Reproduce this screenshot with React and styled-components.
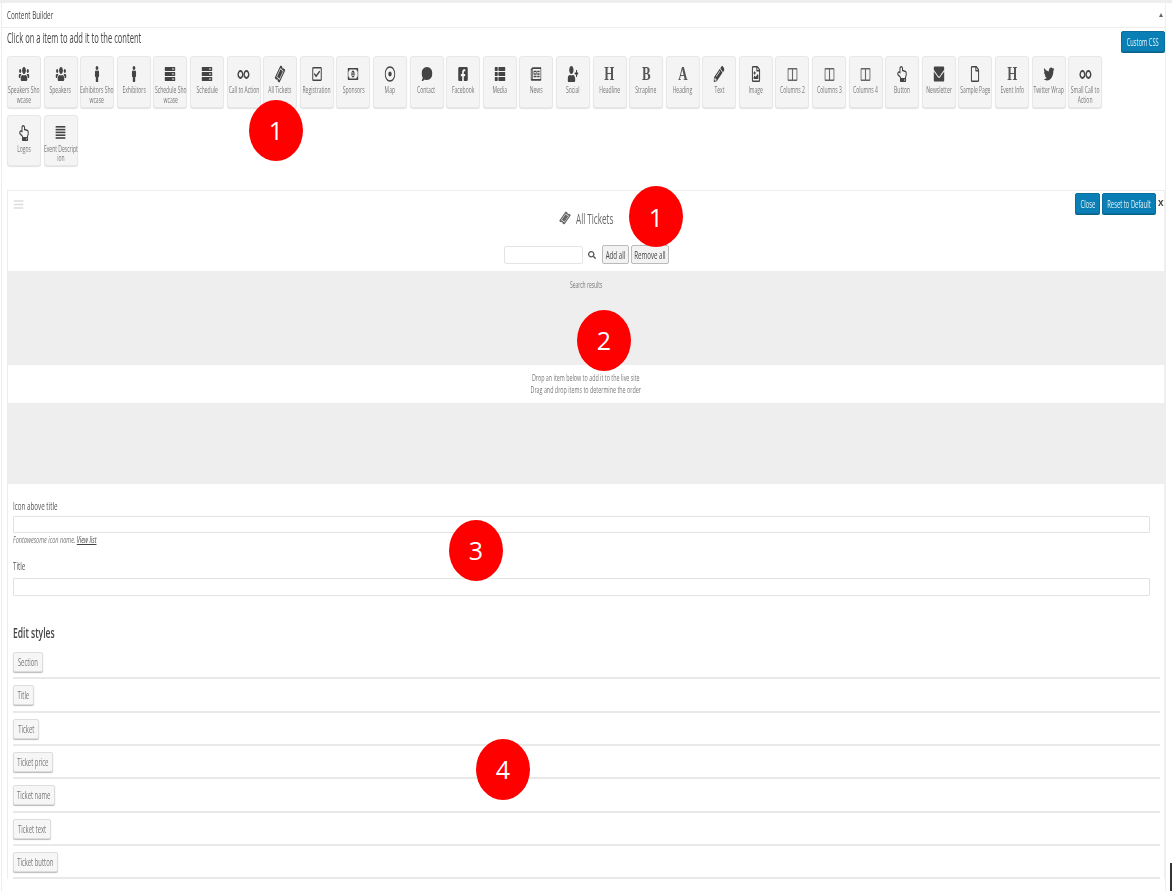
import React from 'react'
import styled, { createGlobalStyle } from 'styled-components'
import {
  FaUsers, FaMale, FaServer, FaTicketAlt, FaRegCheckSquare, FaRegMoneyBillAlt, FaRegDotCircle,
  FaComment, FaFacebookSquare, FaThList, FaRegNewspaper, FaUserPlus, FaPencilAlt, FaRegFileImage,
  FaRegHandPointUp, FaEnvelope, FaRegFile, FaTwitter, FaSearch, FaBars,
} from 'react-icons/fa'

const GlobalStyle = createGlobalStyle`
  html, body { margin: 0; padding: 0; background: #fff; }
  body { font-family: "Open Sans", "Liberation Sans", sans-serif; color: #555; }
`

const Page = styled.div`
  position: relative;
  width: 1172px;
  height: 891px;
  overflow: hidden;
  box-sizing: border-box;
  border-top: 3px solid #eee;
  filter: blur(0.45px);
`

const Narrow = styled.span`
  display: inline-block;
  flex: none;
  width: max-content;
  white-space: pre-line;
  text-align: center;
  transform: scaleX(${p => p.$x || 0.56});
  transform-origin: ${p => p.$origin || 'center'};
`

const Panel = styled.div`
  box-sizing: border-box;
  width: 1165px;
  margin-left: 1px;
  height: 100%;
  border-left: 1px solid #eee;
  border-right: 1px solid #f0f0f0;
`

const PanelHeader = styled.div`
  box-sizing: border-box;
  height: 25px;
  padding: 0 2px 0 5px;
  display: flex;
  align-items: center;
  justify-content: space-between;
  border-bottom: 1px solid #eee;
  font-size: 10px;
  color: #444;
`

const Caret = styled.i`
  width: 0;
  height: 0;
  border-left: 2.5px solid transparent;
  border-right: 2.5px solid transparent;
  border-bottom: 4px solid #666;
`

const PanelBody = styled.div`
  padding-left: 5px;
`

const TopRow = styled.div`
  display: flex;
  justify-content: space-between;
  align-items: flex-start;
  height: 28px;
  padding-top: 3px;
  box-sizing: border-box;
`

const Lead = styled.div`
  font-size: 14px;
  line-height: 14px;
  color: #444;
`

const BlueButton = styled.button`
  box-sizing: border-box;
  width: ${p => p.$w}px;
  height: ${p => p.$h || 21}px;
  padding: 0;
  display: flex;
  align-items: center;
  justify-content: center;
  border: 1px solid #0a6d9c;
  border-radius: 2px;
  background: #0a7fb5;
  color: #e8f4fa;
  font: 11px "Open Sans", sans-serif;
  box-shadow: 0 1px 0 #0a6488;
`

const TileGrid = styled.div`
  display: grid;
  grid-template-columns: repeat(30, 34px);
  grid-auto-rows: 51.5px;
  column-gap: 2.6px;
  row-gap: 7px;
`

const Tile = styled.div`
  box-sizing: border-box;
  padding-top: 10px;
  display: flex;
  flex-direction: column;
  align-items: center;
  background: #f4f4f4;
  border: 1px solid #e8e8e8;
  border-radius: 3px;
  box-shadow: 0 1px 1px #e0e0e0;
`

const TileIcon = styled.div`
  height: 14px;
  display: flex;
  align-items: center;
  justify-content: center;
  color: #444;
  font-size: 16px;
  transform: scaleX(0.68);
`

const TileLabel = styled.div`
  margin-top: 4px;
  display: flex;
  justify-content: center;
  width: 100%;
  font-size: 9.5px;
  line-height: 9.5px;
  color: #777;
`

const SerifGlyph = styled.span`
  display: inline-block;
  font: bold 19px/14px "Liberation Serif", serif;
  color: #555;
`

const Tall = styled.span`
  display: inline-flex;
  transform: scaleY(1.25);
`

const Tilted = styled.span`
  display: inline-flex;
  font-size: ${p => p.$size || 16}px;
  transform: rotate(-55deg) scaleY(0.8);
`

const Card = styled.div`
  box-sizing: border-box;
  margin-top: 24px;
  width: 100%;
  border: 1px solid #eee;
  border-bottom: 0;
`

const CardHead = styled.div`
  display: grid;
  grid-template-columns: 1fr auto 1fr;
  height: 80px;
`

const Handle = styled.div`
  padding: 7px 0 0 5px;
  color: #ddd;
  font-size: 11px;
`

const CardCenter = styled.div`
  display: flex;
  flex-direction: column;
  align-items: center;
`

const CardTitle = styled.div`
  margin-top: 18px;
  display: flex;
  align-items: center;
  gap: 5px;
  height: 18px;
  font-size: 14px;
  color: #666;
`

const TitleText = styled.div`
  width: 38px;
`

const SearchRow = styled.div`
  margin-top: 18px;
  display: flex;
  align-items: center;
  gap: 2px;
  color: #555;
`

const SearchInput = styled.div`
  box-sizing: border-box;
  width: 79px;
  height: 18px;
  margin-right: 3px;
  border: 1px solid #e4e4e4;
  border-radius: 2px;
  background: #fff;
`

const SearchIcon = styled.div`
  display: flex;
  font-size: 8px;
  margin-right: 4px;
`

const GrayButton = styled.button`
  box-sizing: border-box;
  width: ${p => p.$w}px;
  height: 19px;
  padding: 0;
  display: flex;
  align-items: center;
  justify-content: center;
  background: #f2f2f2;
  border: 1px solid #bbb;
  border-radius: 2px;
  color: #444;
  font: 11px "Open Sans", sans-serif;
`

const CardActions = styled.div`
  display: flex;
  justify-content: flex-end;
  gap: 2px;
  padding: 2px 1px 0 0;
`

const CloseX = styled.span`
  width: 5px;
  font: bold 10px/20px "Liberation Sans", sans-serif;
  color: #444;
`

const GrayBand = styled.div`
  box-sizing: border-box;
  height: ${p => p.$h}px;
  display: flex;
  justify-content: center;
  padding-top: 9px;
  background: #eee;
  font-size: 9.5px;
  line-height: 10px;
  color: #777;
`

const DropHint = styled.div`
  height: 38px;
  display: flex;
  justify-content: center;
  padding-top: 7px;
  box-sizing: border-box;
  font-size: 9.5px;
  line-height: 12px;
  color: #777;
`

const Form = styled.div`
  padding: 0 4px 0 5px;
`

const FieldLabel = styled.div`
  margin-top: ${p => p.$top}px;
  font-size: 11px;
  line-height: 10px;
  color: #555;
`

const TextBox = styled.div`
  box-sizing: border-box;
  margin: ${p => p.$top}px 10px 0 0;
  height: ${p => p.$h}px;
  border: 1px solid #e2e2e2;
  border-radius: 1px;
  background: #fff;
`

const Help = styled.div`
  margin-top: 2px;
  font-size: 9.5px;
  line-height: 10px;
  font-style: italic;
  color: #777;
`

const HelpLink = styled.span`
  color: #444;
  text-decoration: underline;
`

const SectionTitle = styled.div`
  margin: 28px 0 12px;
  font-size: 15px;
  font-weight: 600;
  line-height: 16px;
  color: #444;
`

const StyleRow = styled.div`
  padding-bottom: 5.33px;
  margin-bottom: 6px;
  border-bottom: 2px solid #e9e9e9;
`

const StyleButton = styled.button`
  box-sizing: border-box;
  width: ${p => p.$w}px;
  height: 20px;
  padding: 0;
  display: flex;
  align-items: center;
  justify-content: center;
  background: #f6f6f6;
  border: 1px solid #ddd;
  border-radius: 2px;
  box-shadow: 0 1px 1px #bbb;
  color: #777;
  font: 10.5px "Open Sans", sans-serif;
`

const Marker = styled.div`
  position: absolute;
  left: ${p => p.$x - 27}px;
  top: ${p => p.$y - 33.5}px;
  width: 54px;
  height: 61px;
  display: flex;
  align-items: center;
  justify-content: center;
  border-radius: 50%;
  background: #fe0000;
  color: #fff;
  font: 25px "Open Sans", sans-serif;
`

const CornerMark = styled.div`
  position: absolute;
  left: 1170px;
  top: 860px;
  width: 2px;
  height: 28px;
  background: #333;
`

const RingsIcon = () => (
  <svg width="19" height="9" viewBox="0 0 19 9" fill="none" stroke="currentColor" strokeWidth="2">
    <circle cx="5" cy="4.5" r="3.4" />
    <circle cx="13.8" cy="4.5" r="3.4" />
  </svg>
)

const ColumnsIcon = () => (
  <svg width="15" height="13" viewBox="0 0 15 13" fill="none" stroke="#666" strokeWidth="1.6">
    <rect x="0.8" y="0.7" width="13.4" height="11.6" rx="1" />
    <path d="M7.5 1v11" />
  </svg>
)

const LinesIcon = () => (
  <svg width="15" height="13" viewBox="0 0 15 13" fill="currentColor">
    <rect y="0" width="15" height="1.6" />
    <rect y="2.8" width="15" height="1.6" />
    <rect y="5.6" width="15" height="1.6" />
    <rect y="8.4" width="15" height="1.6" />
    <rect y="11.2" width="15" height="1.6" />
  </svg>
)

const tiles = [
  [<Tall><FaUsers /></Tall>, 'Speakers Sho\nwcase'],
  [<Tall><FaUsers /></Tall>, 'Speakers'],
  [<FaMale />, 'Exhibitors Sho\nwcase'],
  [<FaMale />, 'Exhibitors'],
  [<FaServer />, 'Schedule Sho\nwcase'],
  [<FaServer />, 'Schedule'],
  [<RingsIcon />, 'Call to Action'],
  [<Tilted><FaTicketAlt /></Tilted>, 'All Tickets'],
  [<FaRegCheckSquare />, 'Registration'],
  [<Tall><FaRegMoneyBillAlt /></Tall>, 'Sponsors'],
  [<FaRegDotCircle />, 'Map'],
  [<FaComment />, 'Contact'],
  [<FaFacebookSquare />, 'Facebook'],
  [<FaThList />, 'Media'],
  [<Tall><FaRegNewspaper /></Tall>, 'News'],
  [<Tall><FaUserPlus /></Tall>, 'Social'],
  [<SerifGlyph>H</SerifGlyph>, 'Headline'],
  [<SerifGlyph>B</SerifGlyph>, 'Strapline'],
  [<SerifGlyph>A</SerifGlyph>, 'Heading'],
  [<FaPencilAlt />, 'Text'],
  [<FaRegFileImage />, 'Image'],
  [<ColumnsIcon />, 'Columns 2'],
  [<ColumnsIcon />, 'Columns 3'],
  [<ColumnsIcon />, 'Columns 4'],
  [<FaRegHandPointUp />, 'Button'],
  [<Tall><FaEnvelope /></Tall>, 'Newsletter'],
  [<FaRegFile />, 'Sample Page'],
  [<SerifGlyph>H</SerifGlyph>, 'Event Info'],
  [<FaTwitter />, 'Twitter Wrap'],
  [<RingsIcon />, 'Small Call to\nAction'],
  [<FaRegHandPointUp />, 'Logos'],
  [<LinesIcon />, 'Event Descript\nion'],
]

const styleButtons = [
  ['Section', 30],
  ['Title', 21],
  ['Ticket', 26],
  ['Ticket price', 40],
  ['Ticket name', 42],
  ['Ticket text', 38],
  ['Ticket button', 45],
]

const markers = [
  [276, 130, 1],
  [656, 216.5, 1],
  [604, 340, 2],
  [476, 550, 3],
  [503, 769, 4],
]

const App = () => (
  <Page>
    <GlobalStyle />
    <Panel>
      <PanelHeader>
        <Narrow $x={0.63} $origin="left">Content Builder</Narrow>
        <Caret />
      </PanelHeader>
      <PanelBody>
        <TopRow>
          <Lead><Narrow $x={0.54} $origin="left">Click on a item to add it to the content</Narrow></Lead>
          <BlueButton $w={44}><Narrow $x={0.52}>Custom CSS</Narrow></BlueButton>
        </TopRow>
        <TileGrid>
          {tiles.map(([icon, label]) => (
            <Tile key={label}>
              <TileIcon>{icon}</TileIcon>
              <TileLabel><Narrow $x={0.53}>{label}</Narrow></TileLabel>
            </Tile>
          ))}
        </TileGrid>
        <Card>
          <CardHead>
            <Handle><FaBars /></Handle>
            <CardCenter>
              <CardTitle>
                <Tilted $size={12}><FaTicketAlt /></Tilted>
                <TitleText><Narrow $x={0.58} $origin="left">All Tickets</Narrow></TitleText>
              </CardTitle>
              <SearchRow>
                <SearchInput />
                <SearchIcon><FaSearch /></SearchIcon>
                <GrayButton $w={27}><Narrow $x={0.56}>Add all</Narrow></GrayButton>
                <GrayButton $w={38}><Narrow $x={0.56}>Remove all</Narrow></GrayButton>
              </SearchRow>
            </CardCenter>
            <CardActions>
              <BlueButton $w={25}><Narrow $x={0.53}>Close</Narrow></BlueButton>
              <BlueButton $w={54}><Narrow $x={0.53}>Reset to Default</Narrow></BlueButton>
              <CloseX>x</CloseX>
            </CardActions>
          </CardHead>
          <GrayBand $h={94}><Narrow $x={0.52}>Search results</Narrow></GrayBand>
          <DropHint><Narrow $x={0.565}>{'Drop an item below to add it to the live site\nDrag and drop items to determine the order'}</Narrow></DropHint>
          <GrayBand $h={81} />
          <Form>
            <FieldLabel $top={17}><Narrow $x={0.57} $origin="left">Icon above title</Narrow></FieldLabel>
            <TextBox $top={5} $h={17} />
            <Help><Narrow $x={0.585} $origin="left">Fontawesome icon name. <HelpLink>View list</HelpLink></Narrow></Help>
            <FieldLabel $top={16}><Narrow $x={0.57} $origin="left">Title</Narrow></FieldLabel>
            <TextBox $top={7} $h={18} />
            <SectionTitle><Narrow $x={0.57} $origin="left">Edit styles</Narrow></SectionTitle>
            {styleButtons.map(([label, width]) => (
              <StyleRow key={label}>
                <StyleButton $w={width}><Narrow $x={0.56}>{label}</Narrow></StyleButton>
              </StyleRow>
            ))}
          </Form>
        </Card>
      </PanelBody>
    </Panel>
    {markers.map(([x, y, n]) => (
      <Marker key={`${x}-${y}`} $x={x} $y={y}>{n}</Marker>
    ))}
    <CornerMark />
  </Page>
)

export default App
